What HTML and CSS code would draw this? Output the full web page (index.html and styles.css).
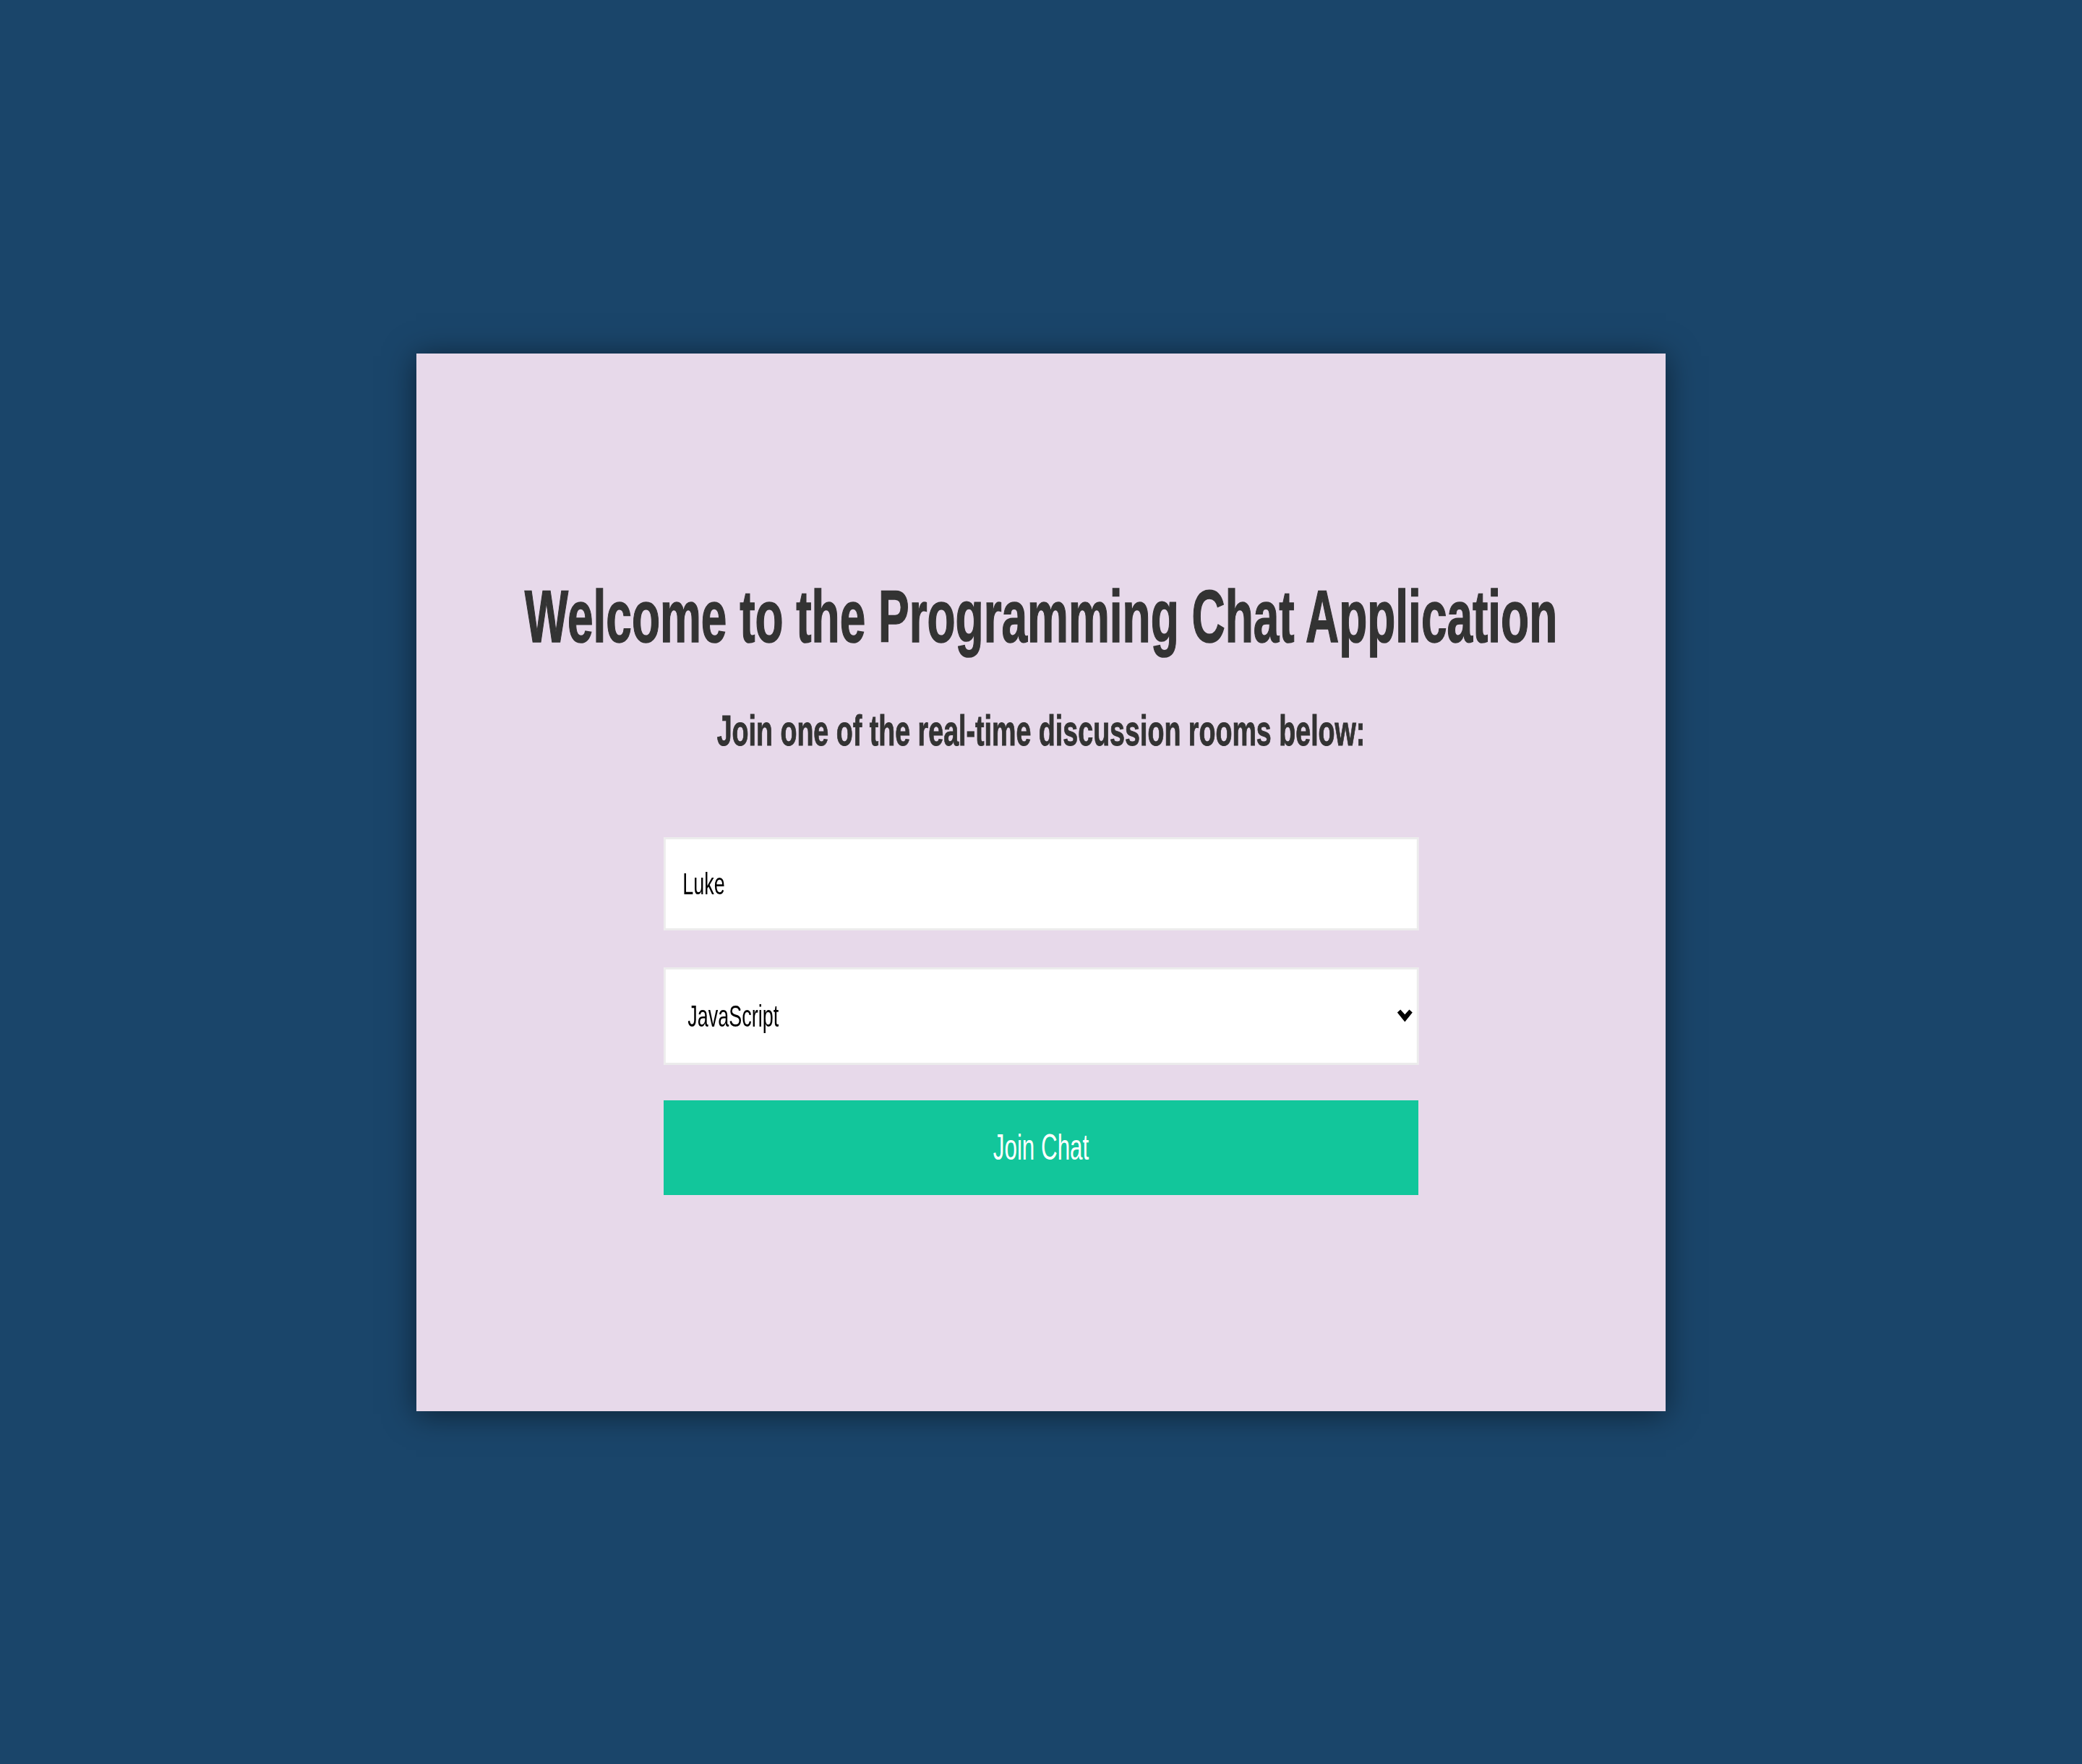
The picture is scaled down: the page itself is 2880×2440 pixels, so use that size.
FILE: index.html
```html
<!DOCTYPE html>
<html lang="en">
<head>
<meta charset="utf-8">
<title>Programming Chat</title>
<link rel="stylesheet" href="styles.css">
</head>
<body>
<main class="card">
  <div class="content">
    <h1 class="title">Welcome to the Programming Chat Application</h1>
    <h2 class="subtitle">Join one of the real-time discussion rooms below:</h2>
    <form class="form">
      <input class="field" type="text" value="Luke">
      <div class="select-wrap">
        <select class="field select">
          <option>JavaScript</option>
          <option>Python</option>
          <option>PHP</option>
        </select>
        <svg class="chevron" viewBox="0 0 21 18" preserveAspectRatio="none" aria-hidden="true">
          <polygon points="0,4.6 4.4,0.4 10.5,7.2 16.6,0.4 21,4.6 10.5,17.6" fill="#000"/>
        </svg>
      </div>
      <button class="btn" type="button">Join Chat</button>
    </form>
  </div>
</main>
</body>
</html>
```

FILE: styles.css
```css
html, body {
  margin: 0;
  padding: 0;
}
body {
  background: #1a456a;
  height: 100vh;
  overflow: hidden;
  display: flex;
  align-items: center;
  justify-content: center;
  font-family: "Liberation Sans", Arial, sans-serif;
}
.card {
  width: 1728px;
  height: 1463px;
  box-sizing: border-box;
  background: #e7d9ea;
  box-shadow: 0 4px 40px rgba(0, 0, 0, 0.5);
  display: flex;
  flex-direction: column;
  align-items: center;
  padding-top: 306px;
  overflow: hidden;
}
.content {
  width: 2756px;
  flex: none;
  transform: scaleX(0.627);
  transform-origin: center top;
  display: flex;
  flex-direction: column;
  align-items: center;
}
.title {
  margin: 0;
  font-size: 102px;
  line-height: 1.15;
  font-weight: 700;
  color: #333;
  white-space: nowrap;
  -webkit-text-stroke: 1.6px #333;
}
.subtitle {
  margin: 64px 0 0;
  font-size: 60px;
  line-height: 1.15;
  font-weight: 700;
  color: #333;
  white-space: nowrap;
  -webkit-text-stroke: 1px #333;
}
.form {
  margin-top: 113px;
  width: 1665px;
  display: flex;
  flex-direction: column;
}
.field {
  box-sizing: border-box;
  width: 100%;
  height: 129px;
  margin: 0 0 51px;
  border-style: solid;
  border-color: #ececec;
  border-width: 3px 4.8px;
  background: #fff;
  font-family: "Liberation Sans", Arial, sans-serif;
  font-size: 43px;
  color: #000;
  padding: 0 0 0 38px;
  outline: none;
}
.select-wrap {
  position: relative;
  margin: 0 0 49px;
}
.select {
  -webkit-appearance: none;
  appearance: none;
  height: 135px;
  margin: 0;
  padding-left: 49px;
  display: block;
}
.chevron {
  position: absolute;
  right: 13px;
  top: 58px;
  width: 33.5px;
  height: 18px;
  pointer-events: none;
}
.btn {
  box-sizing: border-box;
  width: 100%;
  height: 131px;
  border: none;
  background: #12c69b;
  color: #fff;
  font-family: "Liberation Sans", Arial, sans-serif;
  font-size: 50px;
  padding: 0;
  cursor: pointer;
}
```
